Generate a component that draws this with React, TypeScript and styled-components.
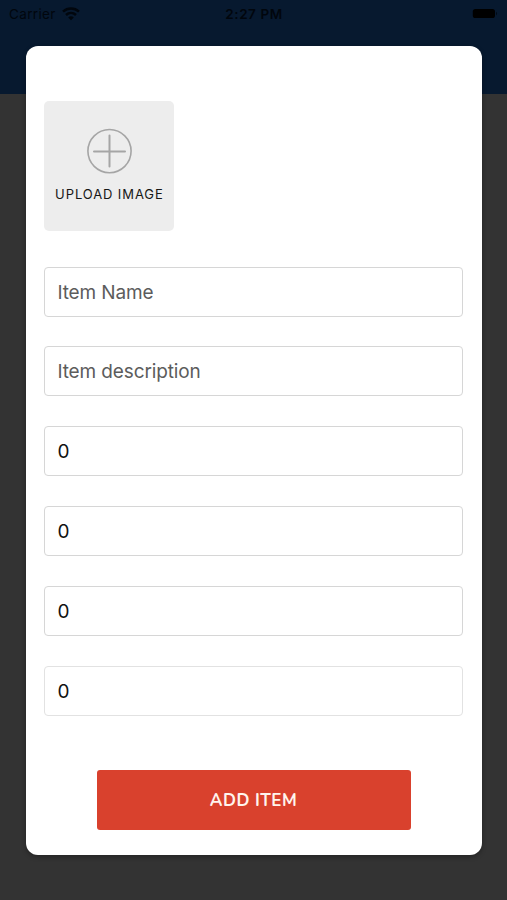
import React from "react";
import styled, { createGlobalStyle } from "styled-components";

const GlobalStyle = createGlobalStyle`
  *, *::before, *::after { box-sizing: border-box; }
  body { margin: 0; background: #333333; }
  button, input { font: inherit; }
`;

const Screen = styled.div`
  width: 507px;
  height: 900px;
  overflow: hidden;
  display: flex;
  flex-direction: column;
  font-family: Inter, sans-serif;
  background: linear-gradient(#07192f 0 94px, #333333 94px);
`;

const StatusBar = styled.header`
  display: grid;
  grid-template-columns: 1fr auto 1fr;
  align-items: center;
  height: 28px;
  padding: 0 8px 0 9px;
  color: #01060d;
  flex: none;
`;

const Carrier = styled.div`
  display: flex;
  align-items: center;
  gap: 6px;
  font-size: 13.5px;
  letter-spacing: 0.35px;
`;

const Clock = styled.div`
  font-size: 13.5px;
  font-weight: 600;
  letter-spacing: 0.55px;
`;

const Battery = styled.svg`
  justify-self: end;
`;

const Card = styled.main`
  width: 456px;
  height: 809.5px;
  margin: 17.5px 0 0 26px;
  padding: 55px 18.4px 0;
  display: flex;
  flex-direction: column;
  flex: none;
  border-radius: 12px;
  background: #ffffff;
  box-shadow: 0 2px 5px rgba(0, 0, 0, 0.3);
`;

const Upload = styled.button`
  width: 130px;
  height: 130px;
  padding: 27px 0 0;
  border: 0;
  border-radius: 5px;
  background: #ededed;
  color: #171717;
  display: flex;
  flex-direction: column;
  align-items: center;
  gap: 10px;
`;

const UploadLabel = styled.span`
  font-size: 13px;
  line-height: 18px;
  letter-spacing: 0.9px;
  white-space: nowrap;
`;

const Fields = styled.div`
  margin-top: 36px;
  display: flex;
  flex-direction: column;
  gap: 29.85px;
`;

const Field = styled.input<{ $faint?: boolean }>`
  width: 419px;
  height: 50px;
  padding: 1px 12px 0;
  border: 1px solid ${(p) => (p.$faint ? "#e2e2e2" : "#d6d6d6")};
  border-radius: 4px;
  outline: 0;
  background: #ffffff;
  color: #111111;
  font-size: 19px;
  letter-spacing: -0.12px;
  &::placeholder {
    color: #5c5c5c;
    opacity: 1;
  }
`;

const Submit = styled.button`
  width: 314px;
  height: 60px;
  margin: 54.5px 0 0 52.2px;
  border: 0;
  border-radius: 3px;
  background: #d9412d;
  color: #fff4ed;
  font-family: Nunito, Lato, sans-serif;
  font-size: 17px;
  font-weight: 700;
  letter-spacing: 0.5px;
`;

const fields = [
  { label: "Item Name", value: "" },
  { label: "Item description", value: "" },
  { label: "", value: "0" },
  { label: "", value: "0" },
  { label: "", value: "0" },
  { label: "", value: "0", faint: true },
];

export default function App() {
  return (
    <>
      <GlobalStyle />
      <Screen>
        <StatusBar>
          <Carrier>
            Carrier
            <svg width="18" height="14" viewBox="0 0 18 14" fill="none" stroke="currentColor" strokeWidth="2.5">
              <path d="M1 4.7C5.6.5 12.4.5 17 4.7" />
              <path d="M4 8c2.9-2.7 7.1-2.7 10 0" />
              <path d="M9 13.3 6.2 10.4c1.6-1.5 4-1.5 5.6 0Z" fill="currentColor" stroke="none" />
            </svg>
          </Carrier>
          <Clock>2:27 PM</Clock>
          <Battery width="27" height="12" viewBox="0 0 27 12">
            <rect x="0.8" y="0.9" width="22.2" height="9.2" rx="2.6" fill="#000000" />
            <path d="M24 3.8c1.4.5 1.4 3 0 3.6Z" fill="#010b17" />
          </Battery>
        </StatusBar>
        <Card>
          <Upload>
            <svg width="47" height="47" viewBox="0 0 47 47" fill="none" stroke="#a5a5a5" strokeWidth="1.6">
              <circle cx="23.5" cy="23.1" r="21.6" />
              <path d="M23.5 7.6v31M8 23.5h31" strokeWidth="2" strokeLinecap="round" />
            </svg>
            <UploadLabel>UPLOAD IMAGE</UploadLabel>
          </Upload>
          <Fields>
            {fields.map((f, i) => (
              <Field key={i} placeholder={f.label} defaultValue={f.value} $faint={f.faint} />
            ))}
          </Fields>
          <Submit>ADD ITEM</Submit>
        </Card>
      </Screen>
    </>
  );
}
